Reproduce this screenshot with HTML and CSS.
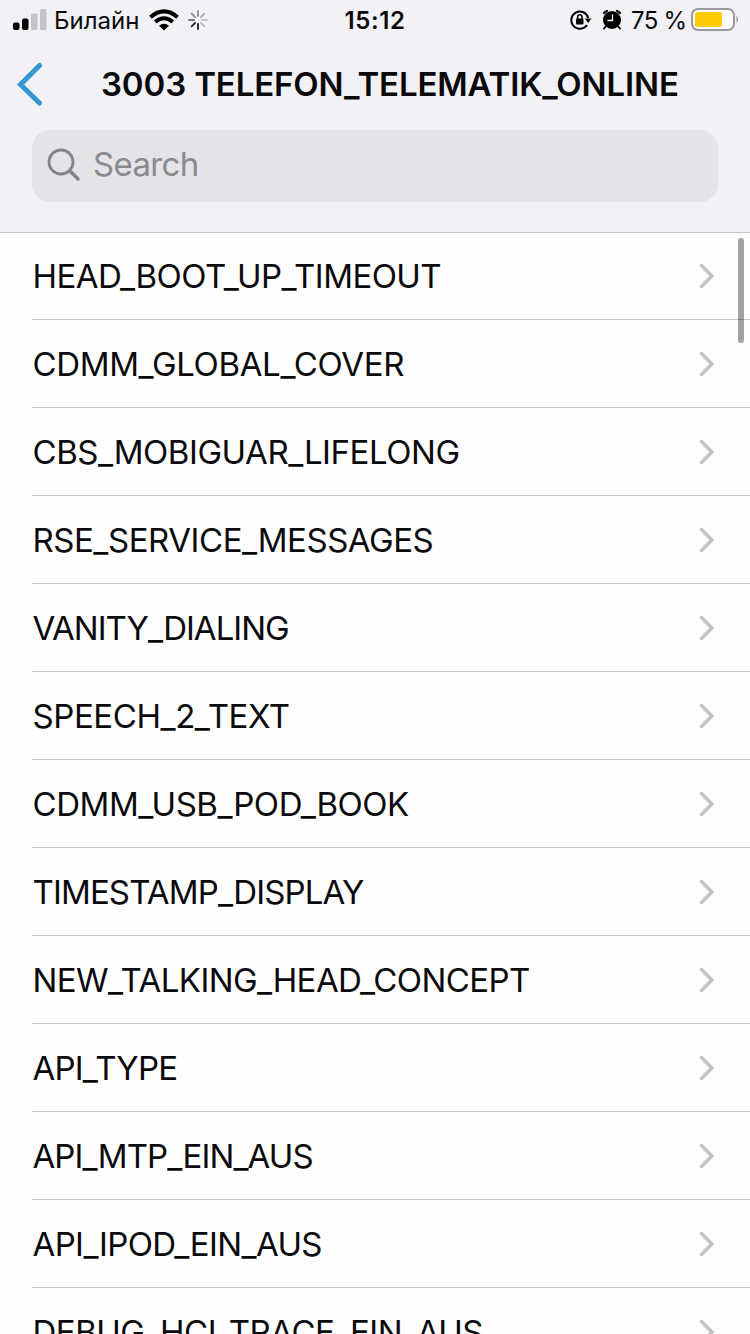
FILE: index.html
```html
<!DOCTYPE html>
<html lang="ru">
<head>
<meta charset="utf-8">
<title>3003 TELEFON_TELEMATIK_ONLINE</title>
<link rel="stylesheet" href="styles.css">
</head>
<body>
<svg class="defs"><symbol id="chevron" viewBox="0 0 16 26"><path d="M2.500 2.500L13 13L2.500 23.500" fill="none" stroke="#c1c1c4" stroke-width="3.400" stroke-linecap="round" stroke-linejoin="miter"/></symbol></svg>
<div class="screen">
  <header class="header">
    <div class="status">
      <div class="status-left">
        <svg class="signal" width="34" height="22" viewBox="0 0 34 22"><rect x="0" y="13.500" width="6.500" height="7.500" rx="2"/><rect x="9" y="9.500" width="6.500" height="11.500" rx="2"/><rect x="18" y="4.500" width="6.500" height="16.500" rx="1.500" fill="#c3c3c8"/><rect x="27" y="0" width="6.500" height="21" rx="1.500" fill="#c3c3c8"/></svg>
        <span class="carrier">Билайн</span>
        <svg class="wifi" width="30" height="22" viewBox="0 0 30 22"><g fill="none" stroke="#000" stroke-width="4"><path d="M1.500 8.200Q15 -3.400 28.500 8.200"/><path d="M6.200 12.900Q15 5.700 23.800 12.900"/></g><path d="M10 16.700Q15 13 20 16.700L15 21.500Z"/></svg>
        <svg class="spinner" width="20" height="20" viewBox="0 0 20 20"><g fill="none" stroke-width="1.800" stroke-linecap="round"><path stroke="#8c8c90" d="M10 1V6"/><path stroke="#aaaaae" d="M16.400 3.600L12.900 7.100"/><path stroke="#c0c0c4" d="M19 10H14"/><path stroke="#b8b8bc" d="M16.400 16.400L12.900 12.900"/><path stroke="#111" d="M10 19V14"/><path stroke="#222" d="M3.600 16.400L7.100 12.900"/><path stroke="#777" d="M1 10H6"/><path stroke="#888" d="M3.600 3.600L7.100 7.100"/></g></svg>
      </div>
      <span class="time">15:12</span>
      <div class="status-right">
        <svg class="lock" width="22" height="20" viewBox="0 0 22 20"><path d="M17 15A8.600 8.600 0 1 1 18.200 8" fill="none" stroke="#000" stroke-width="2"/><path d="M14.800 8.500H21.500L18.200 13Z"/><rect x="6" y="8.500" width="7.500" height="6" rx="1"/><path d="M7.600 9V7A2.200 2.200 0 0 1 12 7V9" fill="none" stroke="#000" stroke-width="1.500"/></svg>
        <svg class="alarm" width="20" height="21" viewBox="0 0 20 21"><circle cx="10" cy="11" r="9"/><path d="M2 4L5 1.800M18 4L15 1.800" stroke="#000" stroke-width="2.200" stroke-linecap="round"/><path d="M4 17L2 19.500M16 17L18 19.500" stroke="#000" stroke-width="2" stroke-linecap="round"/><path d="M10.500 5.500V11.500H5.500" fill="none" stroke="#f1f1f6" stroke-width="1.300"/></svg>
        <span class="percent">75 %</span>
        <svg class="battery" width="48" height="24" viewBox="0 0 48 24"><rect x="1" y="1" width="42" height="21" rx="6" fill="#fbfbfd" stroke="#98989d" stroke-width="2"/><rect x="4" y="4" width="27" height="15" rx="2.500" fill="#fecb05"/><path d="M45.500 8Q48.500 11.500 45.500 15Z" fill="#8d8d92"/></svg>
      </div>
    </div>
    <div class="nav">
      <svg class="back" width="26" height="44" viewBox="0 0 26 44"><path d="M23.500 3.500L4.500 22.500L23.500 41" fill="none" stroke="#3496d2" stroke-width="5" stroke-linecap="round" stroke-linejoin="miter"/></svg>
      <h1 class="title">3003 TELEFON_TELEMATIK_ONLINE</h1>
    </div>
    <div class="search">
      <svg class="glass" width="34" height="34" viewBox="0 0 34 34"><g fill="none" stroke="#828287"><circle cx="14" cy="14" r="12" stroke-width="2.800"/><path d="M23 23L31 31" stroke-width="3.600" stroke-linecap="round"/></g></svg>
      <span class="placeholder">Search</span>
    </div>
  </header>
  <main class="list">
    <div class="row"><span class="label">HEAD_BOOT_UP_TIMEOUT</span><svg class="chevron"><use href="#chevron"/></svg></div>
    <div class="row"><span class="label">CDMM_GLOBAL_COVER</span><svg class="chevron"><use href="#chevron"/></svg></div>
    <div class="row"><span class="label">CBS_MOBIGUAR_LIFELONG</span><svg class="chevron"><use href="#chevron"/></svg></div>
    <div class="row"><span class="label">RSE_SERVICE_MESSAGES</span><svg class="chevron"><use href="#chevron"/></svg></div>
    <div class="row"><span class="label">VANITY_DIALING</span><svg class="chevron"><use href="#chevron"/></svg></div>
    <div class="row"><span class="label">SPEECH_2_TEXT</span><svg class="chevron"><use href="#chevron"/></svg></div>
    <div class="row"><span class="label">CDMM_USB_POD_BOOK</span><svg class="chevron"><use href="#chevron"/></svg></div>
    <div class="row"><span class="label">TIMESTAMP_DISPLAY</span><svg class="chevron"><use href="#chevron"/></svg></div>
    <div class="row"><span class="label">NEW_TALKING_HEAD_CONCEPT</span><svg class="chevron"><use href="#chevron"/></svg></div>
    <div class="row"><span class="label">API_TYPE</span><svg class="chevron"><use href="#chevron"/></svg></div>
    <div class="row"><span class="label">API_MTP_EIN_AUS</span><svg class="chevron"><use href="#chevron"/></svg></div>
    <div class="row"><span class="label">API_IPOD_EIN_AUS</span><svg class="chevron"><use href="#chevron"/></svg></div>
    <div class="row"><span class="label">DEBUG_HCI_TRACE_EIN_AUS</span><svg class="chevron"><use href="#chevron"/></svg></div>
  </main>
  <div class="scrollbar"></div>
</div>
</body>
</html>
```

FILE: styles.css
```css
* { box-sizing: border-box; }
body { margin: 0; background: #fefefe; font-family: Inter, "Liberation Sans", sans-serif; color: #0a0a0c; }
svg { display: block; flex: none; }
.defs { display: none; }
.screen { position: relative; width: 750px; height: 1334px; overflow: hidden; background: #fefefe; }
.header { height: 233px; background: #f1f1f6; border-bottom: 1px solid #c6c6c9; }
.status { height: 40px; display: grid; grid-template-columns: 1fr auto 1fr; align-items: center; }
.status-left { display: flex; align-items: center; padding-left: 13px; }
.carrier { margin-left: 7px; width: 86px; padding-top: 2px; font-size: 24px; line-height: 38px; white-space: nowrap; }
.wifi { margin-left: 9px; }
.spinner { margin-left: 9px; }
.time { padding-top: 2px; font-size: 24px; font-weight: 600; line-height: 38px; letter-spacing: 0.6px; }
.status-right { display: flex; align-items: center; justify-content: flex-end; padding-right: 11px; }
.alarm { margin: 0 0 1px 10px; }
.percent { margin-left: 9px; width: 57px; padding-top: 2px; font-size: 24px; line-height: 38px; white-space: nowrap; letter-spacing: -0.7px; }
.battery { margin-left: 3px; }
.nav { height: 90px; display: flex; align-items: center; padding: 0 0 2px 16px; }
.title { margin: 0 0 0 59px; padding-bottom: 1px; font-size: 33px; font-weight: 600; line-height: 44px; white-space: nowrap; letter-spacing: -0.13px; }
.search { margin: 0 32px; height: 72px; border-radius: 18px; background: #e3e3e8; display: flex; align-items: center; padding: 0 0 2px 15px; }
.placeholder { margin-left: 12px; padding-bottom: 2px; font-size: 33px; color: #8a8a8f; line-height: 44px; letter-spacing: -0.65px; }
.list { padding-left: 32px; }
.row { height: 88px; display: flex; align-items: center; justify-content: space-between; padding-right: 35px; border-bottom: 1px solid #c8c8cb; letter-spacing: -0.5px; }
.row:first-child { height: 87px; }
.label { padding: 1px 0 0 0.5px; font-size: 33px; line-height: 44px; white-space: nowrap; }
.row:first-child .label { padding-top: 0; padding-bottom: 1px; }
.chevron { width: 16px; height: 26px; }
.scrollbar { position: absolute; left: 738px; top: 238px; width: 6px; height: 105px; border-radius: 3px; background: rgba(0, 0, 0, 0.36); }

.row:nth-child(1) { letter-spacing: -0.56px; }
.row:nth-child(2) { letter-spacing: -0.36px; }
.row:nth-child(3) { letter-spacing: -0.45px; }
.row:nth-child(4) { letter-spacing: -0.46px; }
.row:nth-child(5) { letter-spacing: -0.98px; }
.row:nth-child(6) { letter-spacing: -0.42px; }
.row:nth-child(7) { letter-spacing: -0.45px; }
.row:nth-child(8) { letter-spacing: -0.86px; }
.row:nth-child(9) { letter-spacing: -0.57px; }
.row:nth-child(10) { letter-spacing: -0.8px; }
.row:nth-child(11) { letter-spacing: -0.9px; }
.row:nth-child(12) { letter-spacing: -0.61px; }
.row:nth-child(13) { letter-spacing: -0.5px; }
```
